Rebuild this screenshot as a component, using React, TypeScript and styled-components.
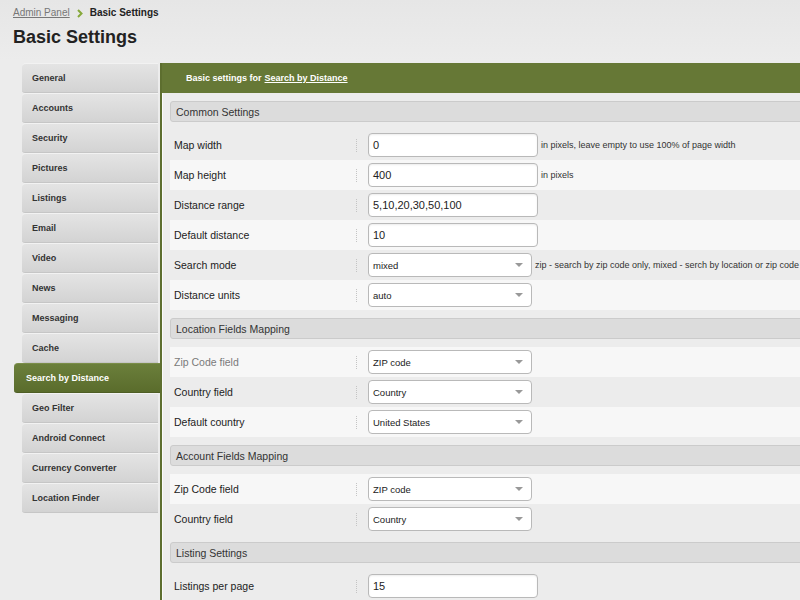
import styled, { createGlobalStyle } from "styled-components";

const GlobalStyle = createGlobalStyle`
  html, body {
    margin: 0;
    padding: 0;
    background: #ebebeb;
    overflow: hidden;
    font-family: "Liberation Sans", Helvetica, Arial, sans-serif;
  }
`;

const Page = styled.div`
  width: 800px;
  height: 600px;
  overflow: hidden;
  background: linear-gradient(#e6e6e6, #ececec 60px);
`;

const Header = styled.div`
  padding: 6px 0 0 13px;
`;

const Breadcrumb = styled.div`
  display: flex;
  align-items: center;
  gap: 7px;
  font-size: 10px;
  line-height: 14px;
`;

const CrumbLink = styled.a`
  color: #777;
  text-decoration: underline;
`;

const CrumbCurrent = styled.span`
  color: #222;
  font-weight: bold;
`;

const Title = styled.h1`
  margin: 5px 0 0;
  font-size: 18px;
  line-height: 24px;
  color: #222;
  font-weight: bold;
`;

const Main = styled.div`
  display: flex;
  margin-top: 14px;
`;

const Sidebar = styled.div`
  width: 160px;
  flex-shrink: 0;
  display: flex;
  flex-direction: column;
  align-items: flex-end;
`;

const Tab = styled.div<{ $active?: boolean }>`
  box-sizing: border-box;
  height: 30px;
  display: flex;
  align-items: center;
  font-size: 9px;
  font-weight: bold;
  border-top-left-radius: 4px;
  border-bottom-left-radius: 3px;
  width: ${(p) => (p.$active ? "146px" : "136px")};
  margin-right: ${(p) => (p.$active ? "0" : "2px")};
  padding-left: ${(p) => (p.$active ? "12px" : "10px")};
  color: ${(p) => (p.$active ? "#fff" : "#333")};
  background: ${(p) =>
    p.$active
      ? "linear-gradient(#6b7f3b, #5a6c2c)"
      : "linear-gradient(#e4e4e4, #d3d3d3)"};
  border-top: 1px solid ${(p) => (p.$active ? "#7a8d48" : "#f2f2f2")};
  border-bottom: 1px solid ${(p) => (p.$active ? "#4e5e25" : "#c6c6c6")};
`;

const Panel = styled.div`
  width: 660px;
  flex-shrink: 0;
  border-left: 2px solid #5d6e2f;
  min-height: 560px;
  background: #ececec;
`;

const PanelHead = styled.div`
  height: 30px;
  display: flex;
  align-items: center;
  padding-left: 24px;
  background: #667836;
  color: #fff;
  font-size: 9px;
  font-weight: bold;
`;

const HeadLink = styled.a`
  color: #fff;
  text-decoration: underline;
  margin-left: 3px;
`;

const PanelBody = styled.div`
  border-left: 1px solid #fafafa;
  padding: 8px 0 0 7px;
`;

const Section = styled.div`
  & + & {
    margin-top: 8px;
  }
`;

const SectionTitle = styled.div`
  box-sizing: border-box;
  height: 21px;
  display: flex;
  align-items: center;
  padding-left: 5px;
  margin-bottom: 8px;
  background: #dcdcdc;
  border: 1px solid #cbcbcb;
  border-radius: 3px;
  font-size: 10.5px;
  color: #333;
`;

const Row = styled.div<{ $light?: boolean }>`
  height: 30px;
  display: flex;
  align-items: center;
  padding-left: 4px;
  background: ${(p) => (p.$light ? "#f7f7f7" : "transparent")};
`;

const Label = styled.div<{ $muted?: boolean }>`
  width: 182px;
  font-size: 10.5px;
  color: ${(p) => (p.$muted ? "#7a7a7a" : "#222")};
`;

const Divider = styled.span`
  width: 0;
  height: 13px;
  border-left: 1px dotted #c4c4c4;
  margin-right: 11px;
`;

const TextInput = styled.div`
  box-sizing: border-box;
  width: 170px;
  height: 24px;
  display: flex;
  align-items: center;
  padding-left: 4px;
  background: #fff;
  border: 1px solid #b9b9b9;
  border-radius: 4px;
  box-shadow: inset 0 1px 2px rgba(0, 0, 0, 0.08);
  font-size: 11px;
  color: #222;
`;

const Select = styled.div`
  box-sizing: border-box;
  width: 164px;
  height: 24px;
  display: flex;
  align-items: center;
  justify-content: space-between;
  padding: 0 8px 0 4px;
  background: #fff;
  border: 1px solid #b9b9b9;
  border-radius: 4px;
  font-size: 9.5px;
  color: #222;
`;

const Caret = styled.span`
  width: 0;
  height: 0;
  border-left: 4px solid transparent;
  border-right: 4px solid transparent;
  border-top: 4px solid #999;
`;

const Help = styled.span`
  margin-left: 3px;
  font-size: 9px;
  color: #333;
  white-space: nowrap;
`;

type Field = {
  label: string;
  value: string;
  kind: "input" | "select";
  help?: string;
  light?: boolean;
  muted?: boolean;
};

type SectionData = { title: string; fields: Field[] };

const sections: SectionData[] = [
  {
    title: "Common Settings",
    fields: [
      { label: "Map width", value: "0", kind: "input", help: "in pixels, leave empty to use 100% of page width" },
      { label: "Map height", value: "400", kind: "input", help: "in pixels", light: true },
      { label: "Distance range", value: "5,10,20,30,50,100", kind: "input" },
      { label: "Default distance", value: "10", kind: "input", light: true },
      {
        label: "Search mode",
        value: "mixed",
        kind: "select",
        help: "zip - search by zip code only, mixed - serch by location or zip code",
      },
      { label: "Distance units", value: "auto", kind: "select", light: true },
    ],
  },
  {
    title: "Location Fields Mapping",
    fields: [
      { label: "Zip Code field", value: "ZIP code", kind: "select", light: true, muted: true },
      { label: "Country field", value: "Country", kind: "select" },
      { label: "Default country", value: "United States", kind: "select", light: true },
    ],
  },
  {
    title: "Account Fields Mapping",
    fields: [
      { label: "Zip Code field", value: "ZIP code", kind: "select", light: true },
      { label: "Country field", value: "Country", kind: "select" },
    ],
  },
  {
    title: "Listing Settings",
    fields: [{ label: "Listings per page", value: "15", kind: "input" }],
  },
];

const tabs = [
  "General",
  "Accounts",
  "Security",
  "Pictures",
  "Listings",
  "Email",
  "Video",
  "News",
  "Messaging",
  "Cache",
  "Search by Distance",
  "Geo Filter",
  "Android Connect",
  "Currency Converter",
  "Location Finder",
];

export default function App() {
  return (
    <Page>
      <GlobalStyle />
      <Header>
        <Breadcrumb>
          <CrumbLink>Admin Panel</CrumbLink>
          <svg width="6" height="9" viewBox="0 0 6 9">
            <path d="M1 1 L4.5 4.5 L1 8" fill="none" stroke="#86a83a" strokeWidth="2" />
          </svg>
          <CrumbCurrent>Basic Settings</CrumbCurrent>
        </Breadcrumb>
        <Title>Basic Settings</Title>
      </Header>
      <Main>
        <Sidebar>
          {tabs.map((t) => (
            <Tab key={t} $active={t === "Search by Distance"}>
              {t}
            </Tab>
          ))}
        </Sidebar>
        <Panel>
          <PanelHead>
            Basic settings for <HeadLink>Search by Distance</HeadLink>
          </PanelHead>
          <PanelBody>
            {sections.map((s) => (
              <Section key={s.title}>
                <SectionTitle>{s.title}</SectionTitle>
                {s.fields.map((f) => (
                  <Row key={f.label} $light={f.light}>
                    <Label $muted={f.muted}>{f.label}</Label>
                    <Divider />
                    {f.kind === "input" ? (
                      <TextInput>{f.value}</TextInput>
                    ) : (
                      <Select>
                        {f.value}
                        <Caret />
                      </Select>
                    )}
                    {f.help && <Help>{f.help}</Help>}
                  </Row>
                ))}
              </Section>
            ))}
          </PanelBody>
        </Panel>
      </Main>
    </Page>
  );
}
